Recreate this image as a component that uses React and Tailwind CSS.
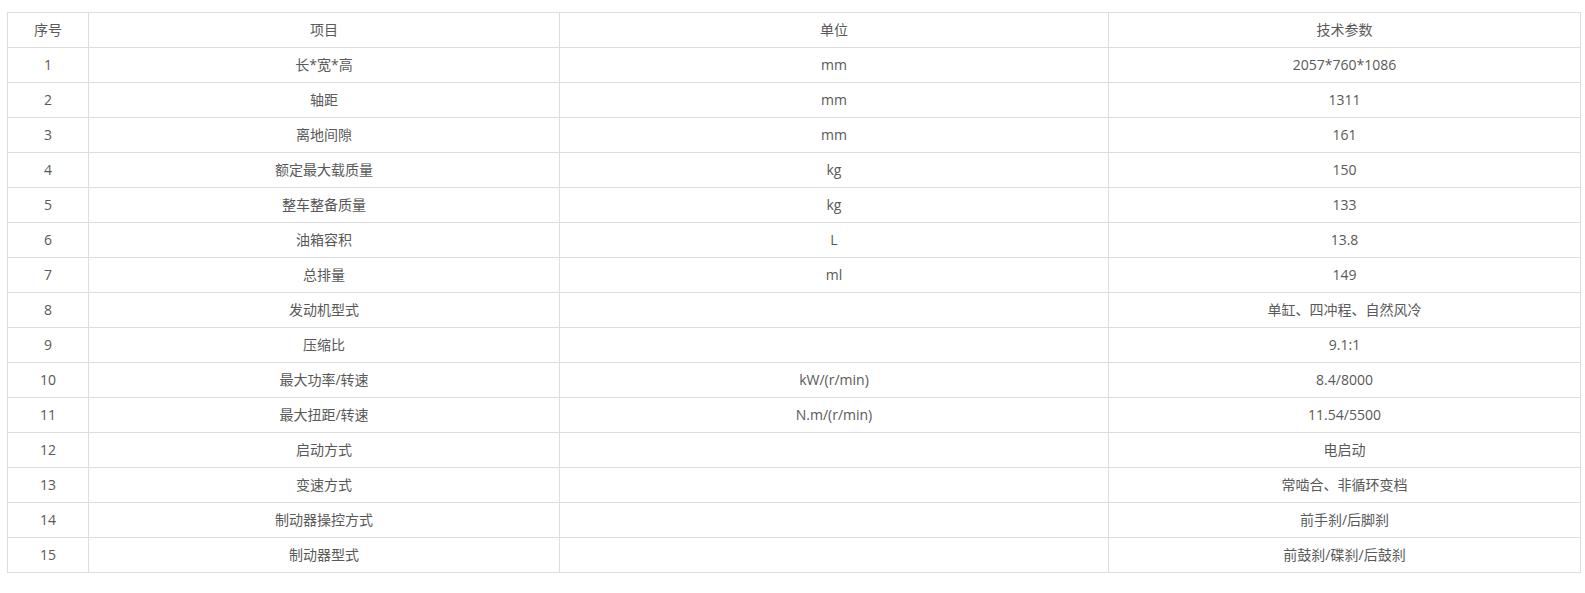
const rows = [
  ["1", "长*宽*高", "mm", "2057*760*1086"],
  ["2", "轴距", "mm", "1311"],
  ["3", "离地间隙", "mm", "161"],
  ["4", "额定最大载质量", "kg", "150"],
  ["5", "整车整备质量", "kg", "133"],
  ["6", "油箱容积", "L", "13.8"],
  ["7", "总排量", "ml", "149"],
  ["8", "发动机型式", "", "单缸、四冲程、自然风冷"],
  ["9", "压缩比", "", "9.1:1"],
  ["10", "最大功率/转速", "kW/(r/min)", "8.4/8000"],
  ["11", "最大扭距/转速", "N.m/(r/min)", "11.54/5500"],
  ["12", "启动方式", "", "电启动"],
  ["13", "变速方式", "", "常啮合、非循环变档"],
  ["14", "制动器操控方式", "", "前手刹/后脚刹"],
  ["15", "制动器型式", "", "前鼓刹/碟刹/后鼓刹"],
];

const App = () => {
  return (
    <div className="bg-white min-h-[593px] pt-[12px] pl-[7px] pr-[6px] font-['Open_Sans','Noto_Sans_CJK_SC',sans-serif] text-[14px] text-[#595959]">
      <table className="w-[1573px] border-collapse table-fixed">
        <colgroup>
          <col className="w-[81px]" />
          <col className="w-[471px]" />
          <col className="w-[549px]" />
          <col className="w-[472px]" />
        </colgroup>
        <thead>
          <tr className="h-[35px]">
            {["序号", "项目", "单位", "技术参数"].map((h) => (
              <th key={h} className="border border-[#ddd] font-normal text-center p-0 pb-[2px]">
                {h}
              </th>
            ))}
          </tr>
        </thead>
        <tbody>
          {rows.map((r) => (
            <tr key={r[0]} className="h-[35px]">
              {r.map((c, i) => (
                <td key={i} className="border border-[#ddd] text-center p-0 pb-[2px]">
                  {c}
                </td>
              ))}
            </tr>
          ))}
        </tbody>
      </table>
    </div>
  );
};

export default App;
